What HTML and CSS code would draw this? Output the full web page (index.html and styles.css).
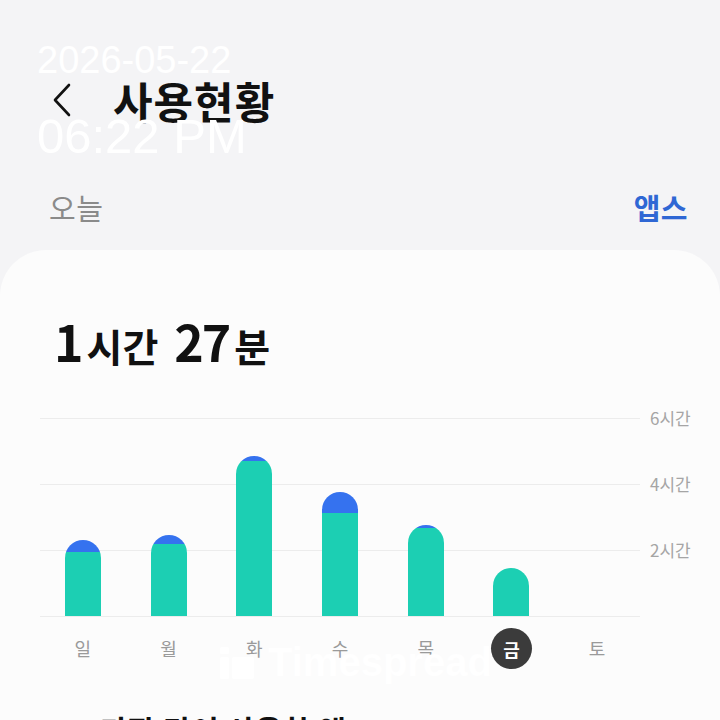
FILE: index.html
```html
<!DOCTYPE html>
<html lang="ko">
<head>
<meta charset="utf-8">
<link rel="stylesheet" href="styles.css">
</head>
<body>
<div class="screen">
  <header class="topbar">
    <svg class="back" width="24" height="36" viewBox="0 0 24 36"><polyline points="19,3 5,18 19,33" fill="none" stroke="#111" stroke-width="2.6" stroke-linecap="round" stroke-linejoin="round"/></svg>
    <h1 class="title">사용현황</h1>
  </header>
  <nav class="tabs">
    <span class="tab">오늘</span>
    <span class="tab active">앱스</span>
  </nav>
  <section class="card">
    <div class="total"><span class="num">1</span><span class="unit">시간</span><span class="num second">27</span><span class="unit">분</span></div>
    <div class="chart">
      <div class="plot">
        <div class="col"><div class="bar" style="height:76px"><div class="seg blue" style="height:12px"></div><div class="seg green"></div></div></div>
        <div class="col"><div class="bar" style="height:81px"><div class="seg blue" style="height:9px"></div><div class="seg green"></div></div></div>
        <div class="col"><div class="bar" style="height:160px"><div class="seg blue" style="height:5px"></div><div class="seg green"></div></div></div>
        <div class="col"><div class="bar" style="height:124px"><div class="seg blue" style="height:21px"></div><div class="seg green"></div></div></div>
        <div class="col"><div class="bar" style="height:91px"><div class="seg blue" style="height:3px"></div><div class="seg green"></div></div></div>
        <div class="col"><div class="bar" style="height:48px"><div class="seg green"></div></div></div>
        <div class="col"></div>
      </div>
      <div class="axis">
        <span>6시간</span>
        <span>4시간</span>
        <span>2시간</span>
      </div>
      <div class="days">
        <span>일</span><span>월</span><span>화</span><span>수</span><span>목</span><span class="today">금</span><span>토</span>
      </div>
    </div>
    <h2 class="section">가장 많이 사용한 앱</h2>
  </section>

  <div class="stamp stamp-date">2026-05-22</div>
  <div class="stamp stamp-time">06:22 PM</div>
  <div class="mark">
    <svg width="34" height="32" viewBox="0 0 34 32"><rect x="0" y="10" width="9" height="22" rx="1.5" fill="#fff"/><rect x="12" y="10" width="22" height="22" rx="2" fill="#fff"/><rect x="0" y="0" width="9" height="7" rx="1.5" fill="#fff"/></svg>
    <span>Timespread</span>
  </div>
</div>
</body>
</html>
```
FILE: styles.css
```css
* { box-sizing: border-box; }
html, body { margin: 0; padding: 0; }
body {
  background: #f4f4f6;
  font-family: "Noto Sans CJK KR", "Noto Sans", sans-serif;
  color: #111;
  width: 720px;
  height: 720px;
  overflow: hidden;
}
.screen { position: relative; width: 720px; height: 720px; overflow: hidden; }

.topbar {
  display: flex;
  align-items: center;
  height: 56px;
  margin-top: 72px;
  padding-left: 50px;
}
.back { display: block; }
.title {
  margin: 0 0 0 39px;
  font-size: 43px;
  font-weight: 700;
  line-height: 56px;
  letter-spacing: 1px;
}

.tabs {
  display: flex;
  justify-content: space-between;
  align-items: center;
  height: 40px;
  margin-top: 59px;
  padding: 0 32px 0 49px;
}
.tab { font-size: 29px; color: #8a8a8a; line-height: 40px; letter-spacing: 0.5px; }
.tab.active { color: #2f67d4; font-weight: 700; }

.card {
  margin-top: 23px;
  background: #fcfcfc;
  border-radius: 46px 46px 0 0;
  min-height: 500px;
  padding-top: 60px;
}
.total {
  padding-left: 54px;
  height: 60px;
  line-height: 60px;
  display: flex;
  align-items: baseline;
}
.total .num { font-size: 50px; font-weight: 700; letter-spacing: -2px; }
.total .num.second { margin-left: 16px; }
.total .unit { font-size: 39px; font-weight: 700; margin-left: 5px; }

.chart {
  margin-top: 48px;
  display: grid;
  grid-template-columns: 600px 1fr;
  padding-left: 40px;
}
.plot {
  height: 199px;
  display: flex;
  align-items: flex-end;
  background: repeating-linear-gradient(to bottom, #ececec 0, #ececec 1px, transparent 1px, transparent 66px);
}
.col {
  flex: 1;
  display: flex;
  justify-content: center;
  align-items: flex-end;
  height: 100%;
}
.bar {
  width: 36px;
  border-radius: 18px 18px 0 0;
  overflow: hidden;
  display: flex;
  flex-direction: column;
  margin-bottom: 1px;
}
.seg { flex: none; }
.seg.blue { background: #3572ef; }
.seg.green { flex: 1; background: #1ccfb3; }

.axis {
  display: flex;
  flex-direction: column;
  gap: 42px;
  margin-top: -12px;
  padding-left: 10px;
}
.axis span { height: 24px; line-height: 24px; font-size: 17px; color: #a5a5a5; }

.days {
  grid-column: 1;
  display: flex;
  margin-top: 11px;
  height: 40px;
}
.days span {
  flex: 1;
  display: flex;
  justify-content: center;
  align-items: center;
  font-size: 18px;
  color: #9a9a9a;
}
.days span.today {
  flex: none;
  width: 41px;
  height: 41px;
  margin: 0 22.35px;
  border-radius: 50%;
  background: #3b3b3b;
  color: #fff;
  font-weight: 700;
}

.section {
  margin: 41px 0 0 100px;
  font-size: 30px;
  font-weight: 700;
  line-height: 40px;
}

.stamp {
  position: absolute;
  left: 37px;
  color: #fff;
  font-family: "Liberation Sans", Arial, sans-serif;
  line-height: 1;
}
.stamp-date { top: 41px; font-size: 38px; }
.stamp-time { top: 112px; font-size: 49px; }

.mark {
  position: absolute;
  left: 220px;
  top: 640px;
  display: flex;
  align-items: center;
  gap: 14px;
  color: #fff;
  font-family: "Liberation Sans", Arial, sans-serif;
  font-weight: 700;
  font-size: 40px;
}
```
